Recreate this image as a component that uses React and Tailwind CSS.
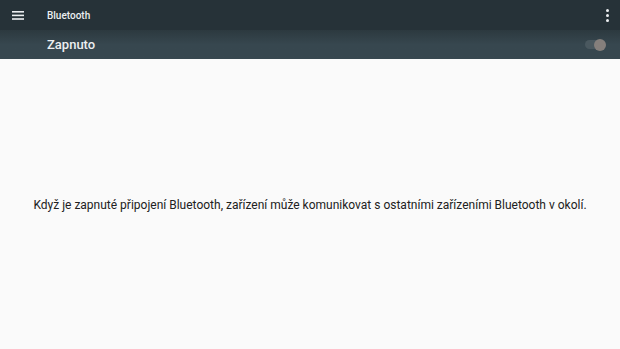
export default function App() {
  return (
    <div className="w-[620px] h-[349px] flex flex-col bg-[#fafafa] overflow-hidden" style={{ fontFamily: "Roboto, 'Noto Sans', sans-serif" }}>
      {/* horní lišta */}
      <div className="h-[30px] bg-[#263238] flex items-center pl-[12px] pr-[10px]">
        <svg width="12" height="9" viewBox="0 0 12 9" className="shrink-0">
          <rect x="0" y="0" width="12" height="1.6" fill="#eceff1" />
          <rect x="0" y="3.6" width="12" height="1.6" fill="#eceff1" />
          <rect x="0" y="7.2" width="12" height="1.6" fill="#eceff1" />
        </svg>
        <span className="ml-[23px] text-[10px] font-medium text-[#eceff1]">Bluetooth</span>
        <div className="ml-auto flex flex-col gap-[2px] pr-[1px]">
          <span className="w-[3px] h-[3px] rounded-full bg-[#eceff1]" />
          <span className="w-[3px] h-[3px] rounded-full bg-[#eceff1]" />
          <span className="w-[3px] h-[3px] rounded-full bg-[#eceff1]" />
        </div>
      </div>
      {/* přepínač */}
      <div className="h-[29px] flex items-center pl-[47px] pr-[15px] bg-gradient-to-b from-[#2c393f] via-[#37474f] to-[#37474f]">
        <span className="text-[13px] font-medium text-[#eceff1]">Zapnuto</span>
        <div className="ml-auto relative w-[20px] h-[9px] rounded-full bg-[#4a585f] flex items-center">
          <span className="absolute right-[-1px] w-[12px] h-[12px] rounded-full bg-[#857f7c] blur-[0.5px]" />
        </div>
      </div>
      <div className="flex-1 flex items-center justify-center pt-[2px]">
        <p className="text-[12px] text-[#212121]">
          Když je zapnuté připojení Bluetooth, zařízení může komunikovat s ostatními zařízeními Bluetooth v okolí.
        </p>
      </div>
    </div>
  );
}
